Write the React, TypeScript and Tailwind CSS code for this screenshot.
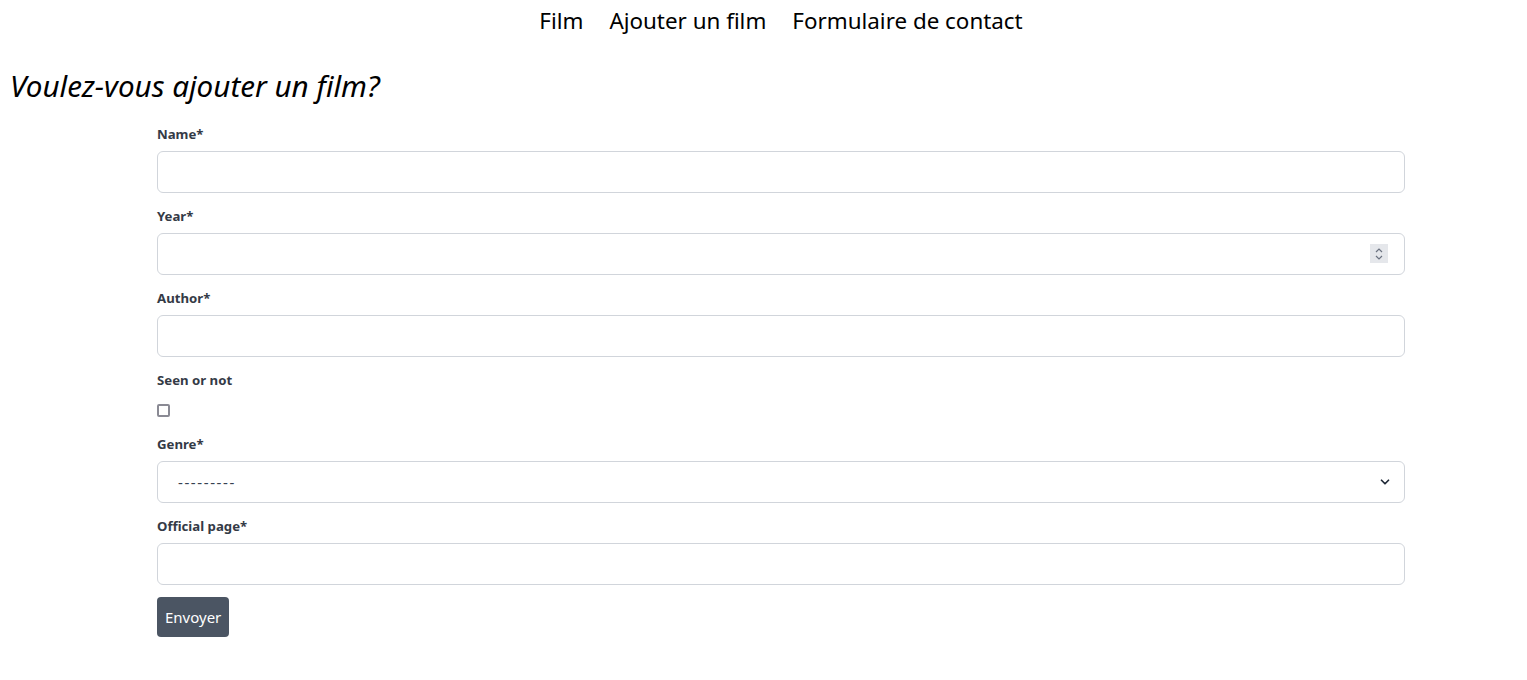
import { ChevronDown } from "lucide-react"

const fields = [
  { label: "Name*", type: "text" },
  { label: "Year*", type: "number" },
  { label: "Author*", type: "text" },
]

function Label({ children }: { children: React.ReactNode }) {
  return (
    <label className="block h-5 mb-[7px] text-[13.2px] leading-5 font-bold text-[#343a46]">
      {children}
    </label>
  )
}

function Spinner() {
  return (
    <div className="absolute right-[17px] top-[11px] w-[18px] h-[19px] bg-[#e5e7eb] flex flex-col items-center justify-center">
      <svg width="8" height="14" viewBox="0 0 8 14" fill="none" stroke="#6b7280" strokeWidth="1.2">
        <path d="M1 5 L4 2 L7 5" />
        <path d="M1 9 L4 12 L7 9" />
      </svg>
    </div>
  )
}

export default function App() {
  return (
    <div className="min-h-[680px] bg-white font-['Noto_Sans',sans-serif] text-black">
      <nav className="h-[42px] flex justify-center items-center pl-[35px]">
        <a className="px-[13px] text-[22.4px] leading-none">Film</a>
        <a className="px-[13px] text-[22.4px] leading-none">Ajouter un film</a>
        <a className="px-[13px] text-[22.4px] leading-none">Formulaire de contact</a>
      </nav>

      <h1 className="pl-[10px] mt-[24px] mb-[18px] text-[29.6px] italic leading-[40px]">Voulez-vous ajouter un film?</h1>

      <form className="ml-[157px] w-[1248px]">
        {fields.map((f) => (
          <div key={f.label} className="mb-[13px]">
            <Label>{f.label}</Label>
            <div className="relative">
              <div className="h-[42px] w-full rounded-md border border-[#d1d5db] bg-white" />
              {f.type === "number" && <Spinner />}
            </div>
          </div>
        ))}

        <div className="mb-[13px]">
          <Label>Seen or not</Label>
          <div className="h-[24px] pt-[7px]">
            <div className="w-[13px] h-[13px] rounded-[2px] border-2 border-[#8a8a94] bg-white" />
          </div>
        </div>

        <div className="mb-[13px]">
          <Label>Genre*</Label>
          <div className="h-[42px] w-full rounded-md border border-[#d1d5db] bg-white flex items-center justify-between pl-[20px] pr-[12px]">
            <span className="text-[15px] text-[#374151] tracking-[1.6px]">---------</span>
            <ChevronDown className="w-[14px] h-[14px] text-[#1f2937]" strokeWidth={3} />
          </div>
        </div>

        <div className="mb-[12px]">
          <Label>Official page*</Label>
          <div className="h-[42px] w-full rounded-md border border-[#d1d5db] bg-white" />
        </div>

        <button type="button" className="h-10 px-[8px] rounded bg-[#4b5563] text-white text-[15px]">
          Envoyer
        </button>
      </form>
    </div>
  )
}
